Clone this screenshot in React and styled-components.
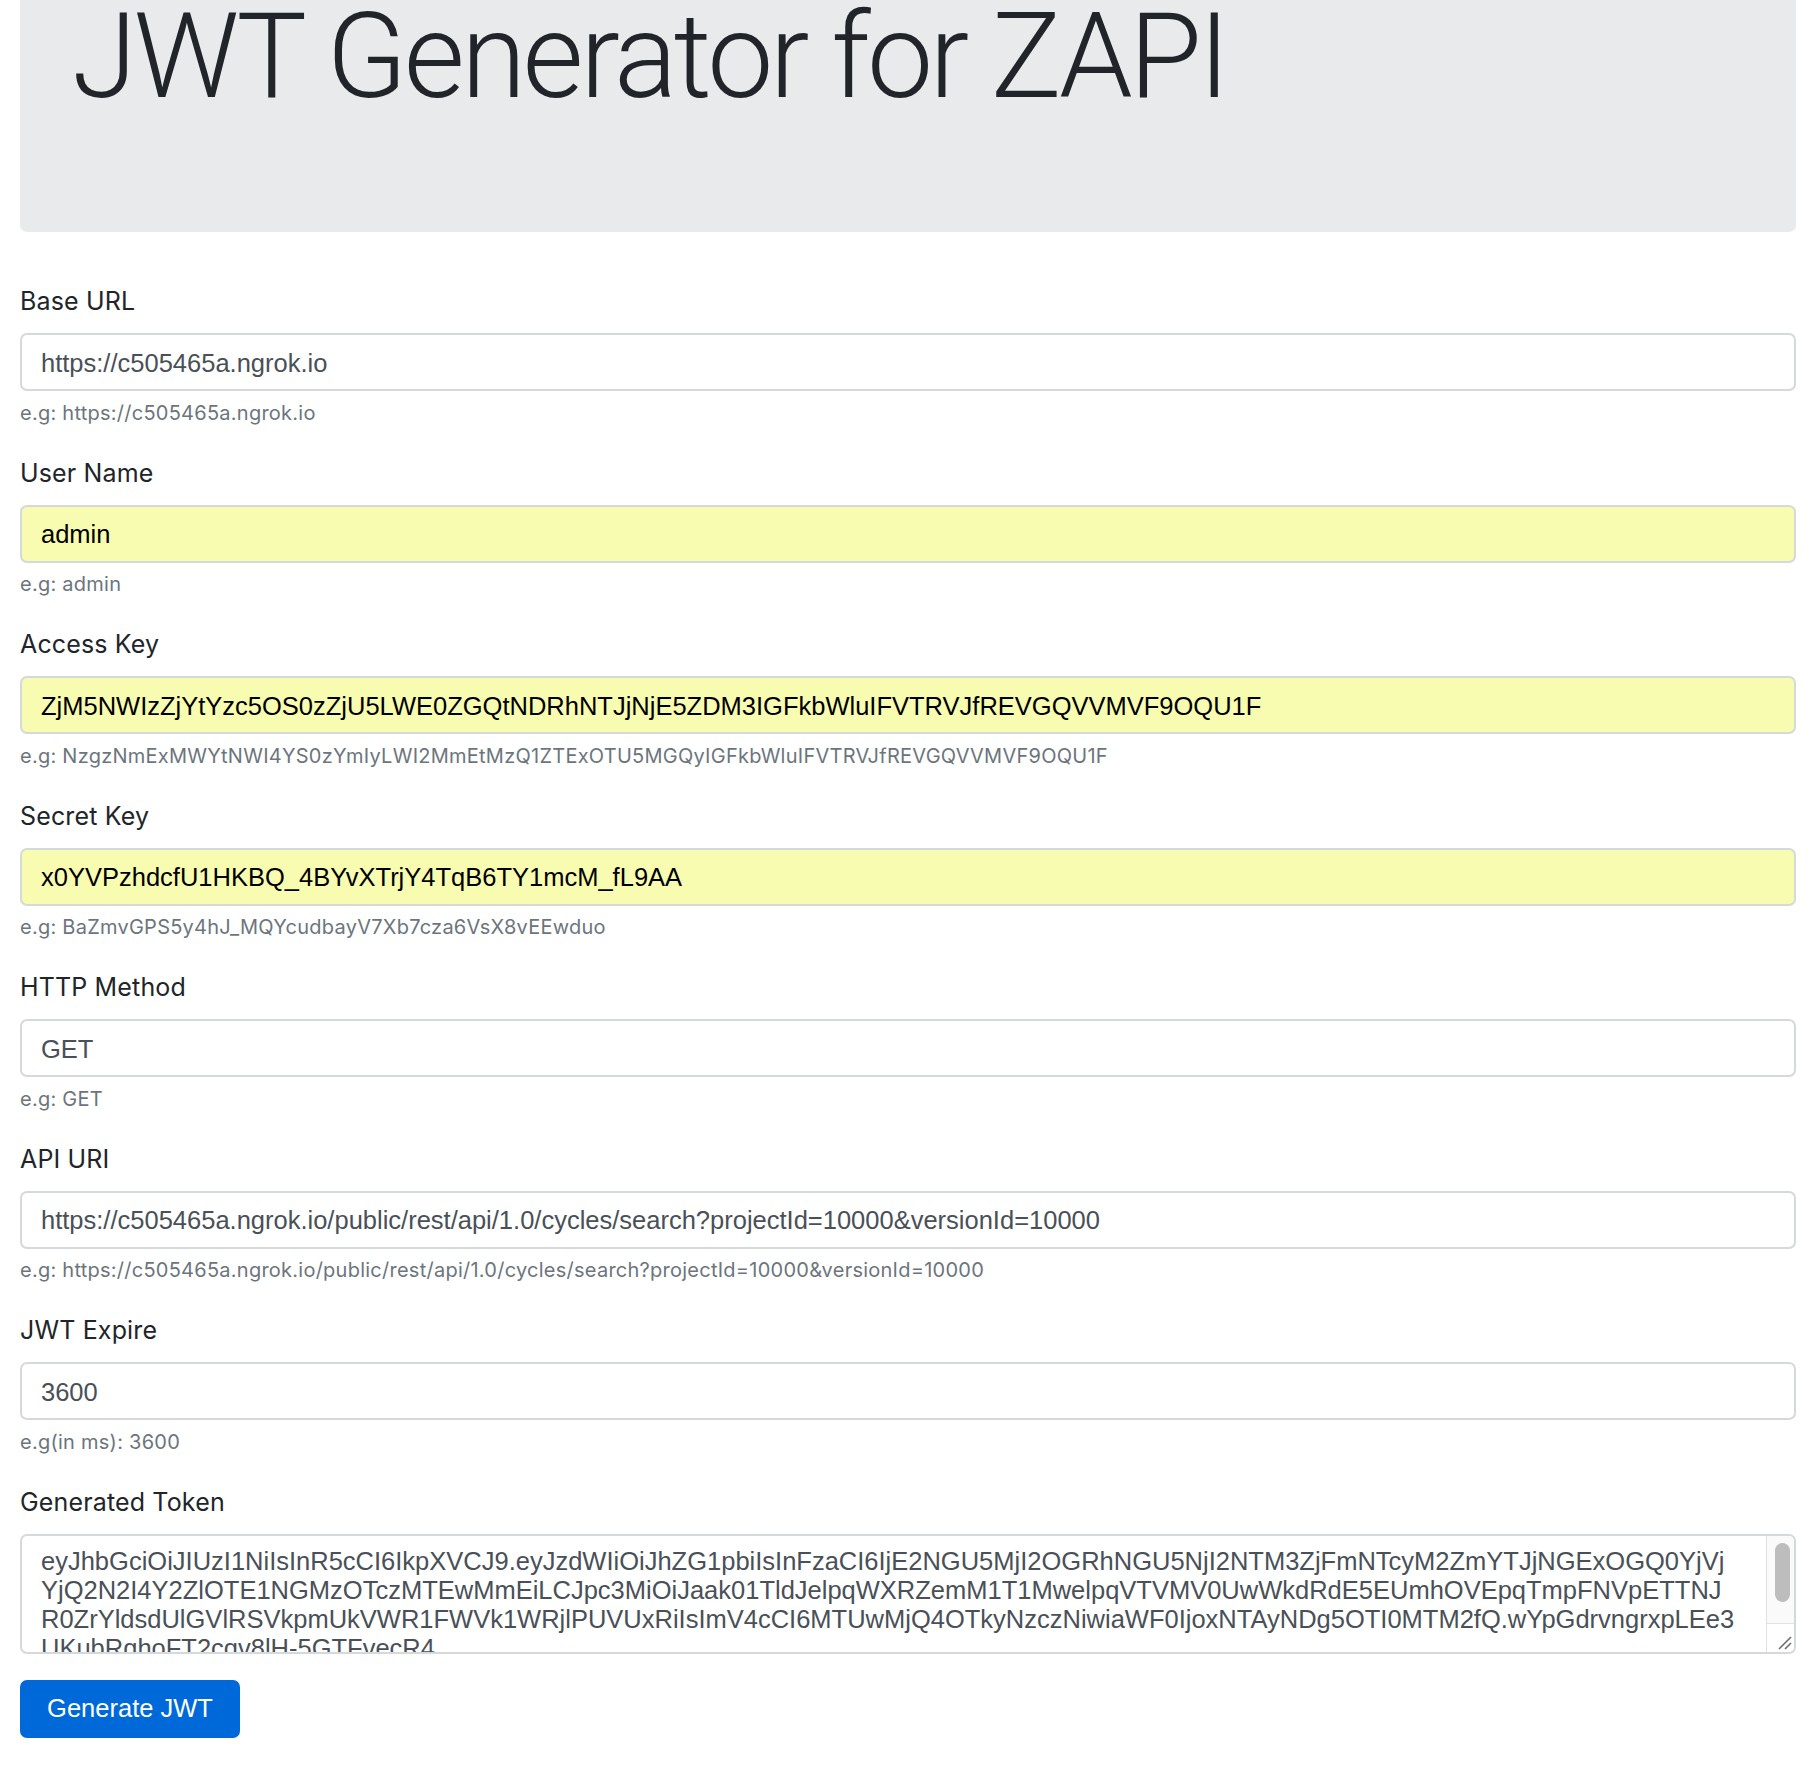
import React from 'react';
import styled, { createGlobalStyle } from 'styled-components';

const GlobalStyle = createGlobalStyle`
  * {
    box-sizing: border-box;
  }
  body {
    margin: 0;
    background: #fff;
    color: #212529;
    font-family: Inter, "Liberation Sans", sans-serif;
  }
`;

const Page = styled.div`
  padding: 0 22px 30px 20px;
`;

const Jumbotron = styled.header`
  height: 232px;
  padding: 7px 52px 0;
  margin-bottom: 50px;
  background: #e9eaec;
  border-radius: 0 0 7px 7px;
`;

const Title = styled.h1`
  margin: 0;
  font-family: Roboto, "Liberation Sans", sans-serif;
  font-weight: 300;
  font-size: 118px;
  line-height: 100px;
  letter-spacing: -3.5px;
  color: #212529;
`;

const FormGroup = styled.div`
  margin-bottom: 26px;
`;

const Label = styled.label`
  display: block;
  margin-bottom: 13px;
  font-size: 25px;
  line-height: 38px;
  letter-spacing: 0.15px;
`;

const fieldFont = `
  font-family: "Liberation Sans", Arial, sans-serif;
  font-size: 25.5px;
`;

const Input = styled.input`
  display: block;
  width: 100%;
  height: 58px;
  padding: 2px 19px 0;
  border: 2px solid #d6d9dc;
  border-radius: 7px;
  background: ${(props) => (props.$autofilled ? '#f7fcb0' : '#fff')};
  color: ${(props) => (props.$autofilled ? '#000' : '#495057')};
  ${fieldFont}
  outline: none;
`;

const Help = styled.small`
  display: block;
  margin-top: 6.5px;
  font-size: 20px;
  line-height: 30px;
  letter-spacing: 0.25px;
  color: #6c757d;
`;

const TokenBox = styled.div`
  position: relative;
`;

const TokenArea = styled.textarea`
  display: block;
  width: 100%;
  height: 120px;
  padding: 11px 36px 11px 19px;
  border: 2px solid #d6d9dc;
  border-radius: 7px;
  background: #fff;
  color: #495057;
  ${fieldFont}
  line-height: normal;
  resize: none;
  outline: none;
  white-space: pre-wrap;
  overflow: hidden;
`;

const ScrollTrack = styled.div`
  position: absolute;
  top: 2px;
  right: 2px;
  width: 28px;
  height: 87px;
  padding: 7px 5px 0 8px;
  background: #fafafa;
  border-left: 1px solid #e2e2e2;
  border-top-right-radius: 5px;
`;

const ScrollThumb = styled.div`
  width: 15px;
  height: 59px;
  border-radius: 8px;
  background: #bdbdbd;
`;

const ResizeCorner = styled.div`
  position: absolute;
  top: 89px;
  right: 2px;
  width: 28px;
  height: 29px;
  display: flex;
  align-items: flex-end;
  justify-content: flex-end;
  padding: 0 2px 2px 0;
  background: #fff;
  border-left: 1px solid #e2e2e2;
  border-top: 1px solid #e2e2e2;
  border-bottom-right-radius: 5px;
`;

const Button = styled.button`
  display: block;
  width: 220px;
  height: 58px;
  padding: 0;
  border: none;
  border-radius: 7px;
  background: #0069d9;
  color: #fff;
  ${fieldFont}
  cursor: pointer;
`;

const ResizeGrip = () => (
  <svg width="16" height="16" viewBox="0 0 16 16" aria-hidden="true">
    <path d="M15 3 L3 15 M15 9 L9 15" stroke="#6f6f6f" strokeWidth="1.6" />
  </svg>
);

const fields = [
  {
    label: 'Base URL',
    value: 'https://c505465a.ngrok.io',
    help: 'e.g: https://c505465a.ngrok.io'
  },
  {
    label: 'User Name',
    value: 'admin',
    help: 'e.g: admin',
    autofilled: true
  },
  {
    label: 'Access Key',
    value:
      'ZjM5NWIzZjYtYzc5OS0zZjU5LWE0ZGQtNDRhNTJjNjE5ZDM3IGFkbWluIFVTRVJfREVGQVVMVF9OQU1F',
    help: 'e.g: NzgzNmExMWYtNWI4YS0zYmIyLWI2MmEtMzQ1ZTExOTU5MGQyIGFkbWluIFVTRVJfREVGQVVMVF9OQU1F',
    autofilled: true
  },
  {
    label: 'Secret Key',
    value: 'x0YVPzhdcfU1HKBQ_4BYvXTrjY4TqB6TY1mcM_fL9AA',
    help: 'e.g: BaZmvGPS5y4hJ_MQYcudbayV7Xb7cza6VsX8vEEwduo',
    autofilled: true
  },
  {
    label: 'HTTP Method',
    value: 'GET',
    help: 'e.g: GET'
  },
  {
    label: 'API URI',
    value:
      'https://c505465a.ngrok.io/public/rest/api/1.0/cycles/search?projectId=10000&versionId=10000',
    help: 'e.g: https://c505465a.ngrok.io/public/rest/api/1.0/cycles/search?projectId=10000&versionId=10000'
  },
  {
    label: 'JWT Expire',
    value: '3600',
    help: 'e.g(in ms): 3600'
  }
];

const token = [
  'eyJhbGciOiJIUzI1NiIsInR5cCI6IkpXVCJ9.eyJzdWIiOiJhZG1pbiIsInFzaCI6IjE2NGU5MjI2OGRhNGU5NjI2NTM3ZjFmNTcyM2ZmYTJjNGExOGQ0YjVj',
  'YjQ2N2I4Y2ZlOTE1NGMzOTczMTEwMmEiLCJpc3MiOiJaak01TldJelpqWXRZemM1T1MwelpqVTVMV0UwWkdRdE5EUmhOVEpqTmpFNVpETTNJ',
  'R0ZrYldsdUlGVlRSVkpmUkVWR1FWVk1WRjlPUVUxRiIsImV4cCI6MTUwMjQ4OTkyNzczNiwiaWF0IjoxNTAyNDg5OTI0MTM2fQ.wYpGdrvngrxpLEe3',
  'UKubRqhoFT2cqv8lH-5GTFvecR4'
].join('\n');

const App = () => (
  <>
    <GlobalStyle />
    <Page>
      <Jumbotron>
        <Title>JWT Generator for ZAPI</Title>
      </Jumbotron>
      <form onSubmit={(e) => e.preventDefault()}>
        {fields.map((field) => (
          <FormGroup key={field.label}>
            <Label>{field.label}</Label>
            <Input
              type="text"
              defaultValue={field.value}
              $autofilled={field.autofilled}
            />
            <Help>{field.help}</Help>
          </FormGroup>
        ))}
        <FormGroup>
          <Label>Generated Token</Label>
          <TokenBox>
            <TokenArea readOnly value={token} />
            <ScrollTrack>
              <ScrollThumb />
            </ScrollTrack>
            <ResizeCorner>
              <ResizeGrip />
            </ResizeCorner>
          </TokenBox>
        </FormGroup>
        <Button type="submit">Generate JWT</Button>
      </form>
    </Page>
  </>
);

export default App;
